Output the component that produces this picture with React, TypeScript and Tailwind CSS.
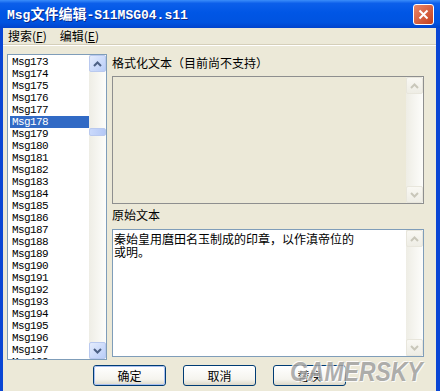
import React from "react"

const CJK = "font-['Noto_Sans_CJK_SC',sans-serif]"

function Chevron({ up, disabled }: { up?: boolean; disabled?: boolean }) {
  return (
    <svg width="9" height="6" viewBox="0 0 9 6">
      <path
        d={up ? "M1 5 L4.5 1.5 L8 5" : "M1 1 L4.5 4.5 L8 1"}
        fill="none"
        stroke={disabled ? "#c9c7ba" : "#4d6185"}
        strokeWidth="2"
      />
    </svg>
  )
}

function ArrowButton({ up, disabled }: { up?: boolean; disabled?: boolean }) {
  return (
    <div
      className={
        "flex h-[17px] w-[17px] items-center justify-center rounded-[2px] border " +
        (disabled
          ? "border-[#e8e6dc] bg-[linear-gradient(to_bottom,#f9f8f3,#eeede5)]"
          : "border-[#b9c9ef] bg-[linear-gradient(to_bottom_right,#e4ecfd,#b9cdf8)]")
      }
    >
      <Chevron up={up} disabled={disabled} />
    </div>
  )
}

function ScrollBar({ disabled, thumb }: { disabled?: boolean; thumb?: boolean }) {
  return (
    <div className="flex h-full w-[17px] flex-col bg-[linear-gradient(to_right,#eeede5,#fdfdfb)]">
      <ArrowButton up disabled={disabled} />
      <div className="relative flex-1">
        {thumb && (
          <div className="absolute left-0 top-[56px] h-[8px] w-[17px] rounded-[2px] border border-[#b9c9ef] bg-[linear-gradient(to_right,#cad9fb,#b4c8f6)]" />
        )}
      </div>
      <ArrowButton disabled={disabled} />
    </div>
  )
}

function XpButton({ label, focused }: { label: string; focused?: boolean }) {
  return (
    <div className="h-[21px] w-[73px] rounded-[3px] border border-[#003c74] bg-[linear-gradient(to_bottom,#ffffff_0%,#f5f4ee_70%,#dcd8c8_100%)]">
      <div
        className={
          "flex h-full w-full items-center justify-center rounded-[2px] text-[12px] text-black " +
          CJK +
          (focused ? " border border-[#a9c0f0]" : "")
        }
      >
        {label}
      </div>
    </div>
  )
}

export default function App() {
  const items: string[] = []
  for (let n = 173; n <= 198; n++) items.push("Msg" + n)

  return (
    <div className="relative flex h-[391px] w-[440px] flex-col overflow-hidden bg-[#0a46d4]">
      {/* title bar */}
      <div className="flex h-[28px] items-center justify-between bg-[linear-gradient(to_bottom,#3b8dfa_0%,#0c5fea_12%,#0056e5_45%,#0053e0_80%,#0143cc_100%)] pl-[7px] pr-[6px]">
        <span className="font-['Liberation_Mono','Noto_Sans_CJK_SC',monospace] text-[13px] font-bold text-white [text-shadow:1px_1px_0_#0b2a8a]">
          Msg<span className={CJK + " text-[14px]"}>文件编辑</span>-S11MSG04.s11
        </span>
        <div className="flex h-[21px] w-[21px] items-center justify-center rounded-[3px] border border-white bg-[linear-gradient(to_bottom_right,#e8876a,#c53f1c)]">
          <svg width="11" height="11" viewBox="0 0 11 11">
            <path d="M1.5 1.5 L9.5 9.5 M9.5 1.5 L1.5 9.5" stroke="#fff" strokeWidth="2" />
          </svg>
        </div>
      </div>

      <div className="flex flex-1 flex-row">
        <div className="w-[3px]" />
        <div className="flex flex-1 flex-col bg-[#ece9d8]">
          {/* menu */}
          <div className={"flex h-[16px] items-center gap-[13px] pl-[5px] text-[12px] text-black " + CJK}>
            <span>
              搜索(<span className="underline">F</span>)
            </span>
            <span>
              编辑(<span className="underline">E</span>)
            </span>
          </div>
          <div className="h-[1px] bg-[#d5cfb9]" />
          <div className="h-[1px] bg-white" />

          {/* body */}
          <div className="mt-[8px] flex flex-row items-start">
            <div className="ml-[4px] flex h-[306px] w-[100px] border border-[#7f9db9] bg-white">
              <div className="flex-1 overflow-hidden pt-[1px]">
                {items.map((it) => (
                  <div
                    key={it}
                    className={
                      "ml-[2px] h-[12px] pl-[2px] font-['Liberation_Mono',monospace] text-[11px] leading-[12px] tracking-[-0.6px] " +
                      (it === "Msg178" ? "bg-[#316ac5] text-white" : "text-black")
                    }
                  >
                    {it}
                  </div>
                ))}
              </div>
              <ScrollBar thumb />
            </div>

            <div className="ml-[5px] flex w-[312px] flex-col">
              <div className={"flex h-[18px] items-center text-[12px] text-black " + CJK}>
                格式化文本（目前尚不支持）
              </div>
              <div className="mt-[4px] flex h-[128px] border border-[#8e8f8f] bg-[#ece9d8]">
                <div className="flex-1" />
                <ScrollBar disabled />
              </div>
              <div className={"flex h-[22px] items-center text-[12px] text-black " + CJK}>原始文本</div>
              <div className="mt-[3px] flex h-[128px] border border-[#7f9db9] bg-white">
                <div className={"flex-1 pl-[1px] pt-[2px] text-[12px] leading-[13px] text-black " + CJK}>
                  秦始皇用麿田名玉制成的印章，以作滇帝位的
                  <br />
                  或明。
                </div>
                <ScrollBar disabled />
              </div>
            </div>
          </div>

          {/* buttons */}
          <div className="mt-[5px] flex flex-row gap-[17px] pl-[90px]">
            <XpButton label="确定" focused />
            <XpButton label="取消" />
            <XpButton label="替换" />
          </div>
        </div>
        <div className="w-[4px]" />
      </div>

      {/* watermark */}
      <span className="pointer-events-none absolute left-[290px] top-[357px] origin-left scale-x-[0.82] font-['Liberation_Sans',sans-serif] text-[28px] font-bold italic leading-[30px] text-[#a3a3a3] opacity-85 [text-shadow:1px_1px_0_#ffffff,-1px_-1px_0_#ffffff]">
        GAMERSKY
      </span>
    </div>
  )
}
